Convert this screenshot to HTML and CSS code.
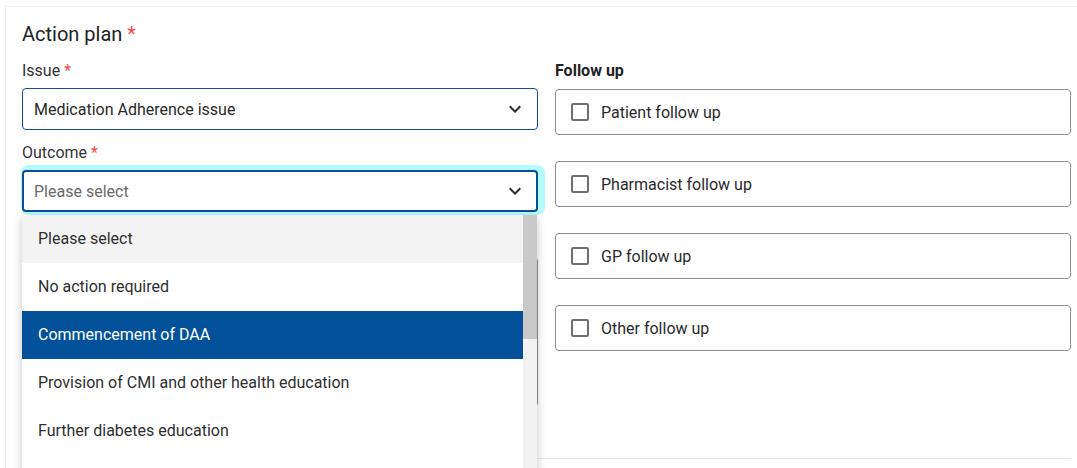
FILE: index.html
```html
<!DOCTYPE html>
<html lang="en">
<head>
<meta charset="utf-8">
<title>Action plan</title>
<link rel="stylesheet" href="styles.css">
</head>
<body>
<div class="card">
  <h2 class="title">Action plan <span class="req">*</span></h2>
  <div class="cols">
    <div class="col">
      <div class="field">
        <label class="label">Issue <span class="req">*</span></label>
        <div class="select">
          <span class="value">Medication Adherence issue</span>
          <svg class="chev" viewBox="0 0 24 24" width="24" height="24"><path d="M16.59 8.59L12 13.17 7.41 8.59 6 10l6 6 6-6z"/></svg>
        </div>
      </div>
      <div class="field field-gap">
        <label class="label">Outcome <span class="req">*</span></label>
        <div class="select-wrap">
          <div class="select focused">
            <span class="placeholder">Please select</span>
            <svg class="chev" viewBox="0 0 24 24" width="24" height="24"><path d="M16.59 8.59L12 13.17 7.41 8.59 6 10l6 6 6-6z"/></svg>
          </div>
          <div class="menu">
            <ul class="options">
              <li class="opt hover">Please select</li>
              <li class="opt">No action required</li>
              <li class="opt selected">Commencement of DAA</li>
              <li class="opt">Provision of CMI and other health education</li>
              <li class="opt">Further diabetes education</li>
              <li class="opt spacer"></li>
            </ul>
            <div class="scrollbar"><div class="thumb"></div></div>
          </div>
        </div>
      </div>
      <div class="notes"></div>
    </div>
    <div class="col">
      <div class="label bold">Follow up</div>
      <div class="checks">
        <div class="check"><span class="box"></span><span>Patient follow up</span></div>
        <div class="check"><span class="box"></span><span>Pharmacist follow up</span></div>
        <div class="check"><span class="box"></span><span>GP follow up</span></div>
        <div class="check"><span class="box"></span><span>Other follow up</span></div>
      </div>
    </div>
  </div>
  <div class="divider"></div>
</div>
</body>
</html>
```
FILE: styles.css
```css
html, body {
  margin: 0;
  padding: 0;
  background: #fff;
  overflow: hidden;
}
body {
  font-family: Roboto, "Liberation Sans", Arial, sans-serif;
  color: #2a2a2a;
  font-size: 16px;
}
.card {
  margin: 6px 0 0 5px;
  border-top: 1px solid #ececec;
  border-left: 1px solid #ececec;
  padding: 15px 16px 40px 16px;
  width: 1049px;
}
.title {
  margin: 0 0 14px 0;
  font-size: 20px;
  line-height: 24px;
  font-weight: 400;
  color: #222;
}
.req {
  color: #ef4d4d;
}
.cols {
  display: grid;
  grid-template-columns: 516px 516px;
  column-gap: 17px;
  align-items: start;
}
.col {
  display: flex;
  flex-direction: column;
}
.label {
  display: block;
  font-size: 16px;
  line-height: 21px;
  margin-bottom: 7px;
  color: #333;
}
.label.bold {
  font-weight: 700;
  font-size: 16px;
  margin-bottom: 8px;
  color: #222;
}
.field-gap {
  margin-top: 12px;
}
.select-wrap {
  position: relative;
}
.select {
  box-sizing: border-box;
  height: 42px;
  border: 1px solid #0b4f9c;
  border-radius: 4px;
  padding: 0 10px 0 11px;
  display: flex;
  align-items: center;
  justify-content: space-between;
  background: #fff;
  color: #2a2a2a;
}
.select.focused {
  border: 2px solid #094e9a;
  padding: 0 9px 0 10px;
  box-shadow: 3px -1px 0 4px #b3fbff;
}
.placeholder {
  color: #6a6a6a;
}
.chev {
  fill: #2b2b2b;
  display: block;
}
.menu {
  position: absolute;
  top: calc(100% + 3px);
  left: 0;
  width: 515px;
  background: #fff;
  box-shadow: 0 3px 9px rgba(0, 0, 0, 0.22);
  display: flex;
  z-index: 5;
}
.options {
  list-style: none;
  margin: 0;
  padding: 0;
  flex: 1;
}
.opt {
  height: 48px;
  line-height: 48px;
  padding-left: 16px;
  font-size: 16px;
  color: #2f2f2f;
}
.opt.hover {
  background: #f3f3f3;
}
.opt.selected {
  background: #03519b;
  color: #fff;
}
.scrollbar {
  width: 14px;
  background: #f1f1f1;
}
.thumb {
  height: 124px;
  background: #c9c9c9;
}
.notes {
  margin-top: 45px;
  height: 150px;
  box-sizing: border-box;
  border: 1px solid #8c8c8c;
  border-radius: 4px;
}
.checks {
  display: flex;
  flex-direction: column;
  gap: 26px;
}
.check {
  box-sizing: border-box;
  height: 46px;
  border: 1px solid #8e8e8e;
  border-radius: 4px;
  padding-left: 15px;
  display: flex;
  align-items: center;
  gap: 12px;
  font-size: 16px;
  color: #2a2a2a;
}
.box {
  box-sizing: border-box;
  width: 18px;
  height: 18px;
  border: 2px solid #717171;
  border-radius: 2px;
  flex: none;
}
.divider {
  margin-top: 51px;
  border-top: 1px solid #e8e8e8;
}
```
